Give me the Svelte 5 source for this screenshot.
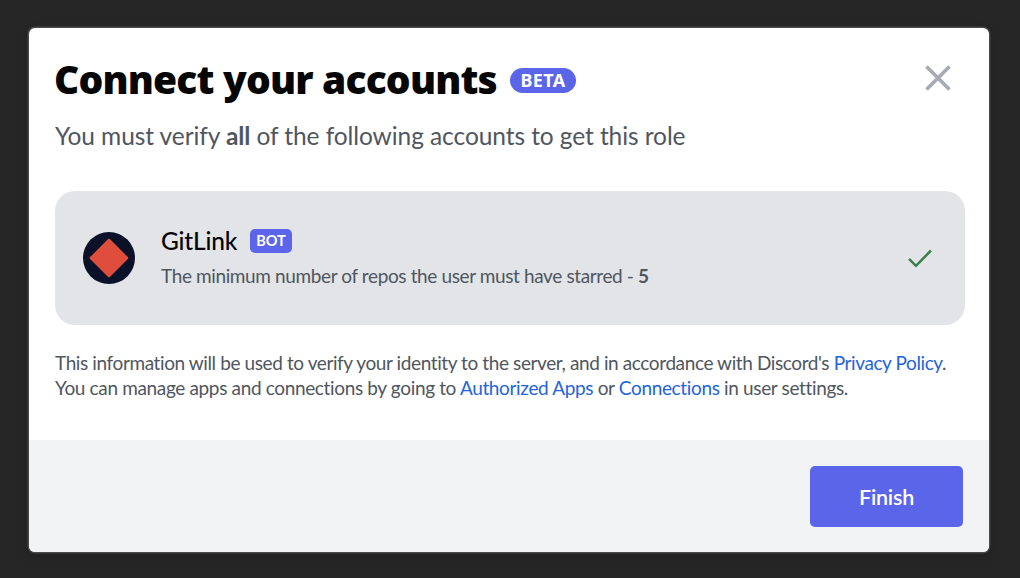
<script>
  const account = {
    name: 'GitLink',
    requirement: 'The minimum number of repos the user must have starred',
    value: 5
  };
</script>

<main>
  <section class="modal" role="dialog" aria-labelledby="title">
    <div class="body">
      <header>
        <div class="heading">
          <h1 id="title">Connect your accounts</h1>
          <span class="beta">BETA</span>
        </div>
        <button class="close" aria-label="Close">
          <svg width="28" height="28" viewBox="0 0 28 28">
            <path d="M2.5 2.5 25.5 25.5M25.5 2.5 2.5 25.5" fill="none" stroke="#a7abb3" stroke-width="3.8" />
          </svg>
        </button>
      </header>
      <p class="subtitle">You must verify <b>all</b> of the following accounts to get this role</p>

      <div class="account">
        <svg class="avatar" width="52" height="52" viewBox="0 0 52 52">
          <circle cx="26" cy="26" r="26" fill="#0b1129" />
          <path d="M26 8 44 26 26 44 8 26Z" fill="#df4e3c" stroke="#df4e3c" stroke-width="2.5" stroke-linejoin="round" />
        </svg>
        <div class="details">
          <div class="name-row">
            <span class="name">{account.name}</span>
            <span class="bot">BOT</span>
          </div>
          <p class="requirement">{account.requirement} - <b>{account.value}</b></p>
        </div>
        <svg class="check" width="26" height="20" viewBox="0 0 26 20">
          <path d="M2 10.8 9 17.8 24 2.5" fill="none" stroke="#3d7d4b" stroke-width="2.5" />
        </svg>
      </div>

      <div class="notice">
        <p class="first">This information will be used to verify your identity to the server, and in accordance with Discord's <a href="#privacy">Privacy Policy</a>.</p>
        <p class="second">You can manage apps and connections by going to <a href="#apps">Authorized Apps</a> or <a href="#connections">Connections</a> in user settings.</p>
      </div>
    </div>
    <footer><button class="finish">Finish</button></footer>
  </section>
</main>

<style>
  :global(body) {
    background: #262626;
  }
  main {
    box-sizing: border-box;
    height: 578px;
    padding: 28px 31px 26px 29px;
    font-family: Lato, 'Noto Sans', sans-serif;
    font-variant-ligatures: none;
    color: #4f5660;
    overflow: hidden;
  }
  .modal {
    display: flex;
    flex-direction: column;
    height: 524px;
    border-radius: 6px;
    background: #fff;
    box-shadow: 0 0 0 1.5px #48494b, 0 4px 12px rgba(0, 0, 0, 0.16);
    overflow: hidden;
  }
  .body {
    box-sizing: border-box;
    height: 412px;
    padding: 24px 24px 0 26px;
  }
  header,
  .heading,
  .name-row,
  .account {
    display: flex;
    align-items: center;
  }
  header {
    justify-content: space-between;
    height: 56px;
  }
  h1,
  p {
    margin: 0;
    white-space: nowrap;
  }
  h1 {
    width: 443px;
    margin-left: -1px;
    padding-bottom: 2px;
    color: #060607;
    font-family: 'Open Sans', sans-serif;
    font-size: 39px;
    line-height: 52px;
    font-weight: 800;
    letter-spacing: -0.83px;
  }
  .heading {
    gap: 13px;
  }
  .beta {
    box-sizing: border-box;
    width: 66px;
    height: 25px;
    border-radius: 13px;
    background: #5b65ea;
    color: #fff;
    text-align: center;
    font-family: 'Noto Sans', sans-serif;
    font-size: 18px;
    line-height: 25px;
    font-weight: 700;
    letter-spacing: 0.4px;
  }
  button {
    border: 0;
    padding: 0;
    font-family: inherit;
  }
  .close {
    width: 28px;
    height: 28px;
    margin: 0 13px 4px 0;
    background: none;
  }
  .close svg,
  .avatar,
  .check {
    display: block;
  }
  .subtitle {
    margin-top: 11px;
    font-size: 24.5px;
    line-height: 34px;
    letter-spacing: -0.08px;
  }
  .account {
    box-sizing: border-box;
    height: 134px;
    margin-top: 38px;
    padding: 0 32px 0 28px;
    border-radius: 20px;
    background: #e3e4e8;
  }
  .details {
    flex: 1;
    margin-left: 26px;
  }
  .name-row {
    gap: 13px;
    height: 34px;
  }
  .name {
    width: 76px;
    color: #060607;
    font-size: 24.5px;
    line-height: 34px;
    font-weight: 500;
    letter-spacing: -0.2px;
  }
  .bot {
    width: 42px;
    height: 24px;
    margin-bottom: 1px;
    border-radius: 5px;
    background: #5b65ea;
    color: #fff;
    text-align: center;
    font-size: 14.5px;
    line-height: 23px;
    font-weight: 700;
  }
  .requirement {
    padding-top: 1px;
    font-size: 19px;
    line-height: 34px;
    margin-bottom: -1px;
    letter-spacing: -0.38px;
  }
  .notice {
    margin-top: 25px;
    font-size: 19px;
    line-height: 25px;
    letter-spacing: -0.35px;
  }
  .first {
    letter-spacing: -0.395px;
  }
  a {
    color: #2464dc;
    text-decoration: none;
  }
  footer {
    display: flex;
    flex: 1;
    align-items: center;
    justify-content: flex-end;
    padding-right: 26px;
    background: #f2f3f5;
  }
  .finish {
    width: 153px;
    height: 61px;
    padding-top: 1px;
    border-radius: 5px;
    background: #5b65ea;
    color: #fff;
    font-size: 21.5px;
    font-weight: 600;
    letter-spacing: -0.2px;
  }
</style>
